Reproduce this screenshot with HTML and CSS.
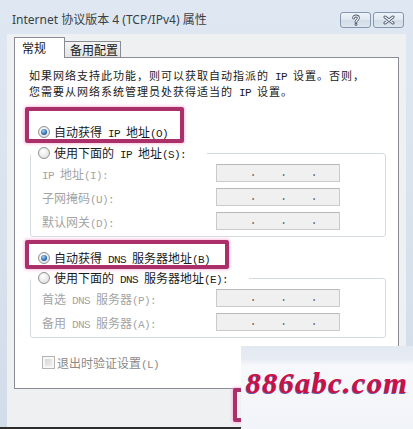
FILE: index.html
```html
<!DOCTYPE html>
<html lang="zh-CN">
<head>
    <meta charset="UTF-8">
    <meta name="viewport" content="width=device-width, initial-scale=1.0">
    <title>Internet 协议版本 4 (TCP/IPv4) 属性</title>
    <link rel="stylesheet" href="styles.css">
</head>
<body>
<div class="window">
    <!-- Title bar -->
    <div class="titlebar">
        <span class="title">Internet 协议版本 4 (TCP/IPv4) 属性</span>
        <div class="caption-buttons">
            <span class="cap-btn">
                <svg width="10" height="12" viewBox="0 0 10 12">
                    <path d="M2.6 4 C2.6 1.3 7.4 1.3 7.4 4 C7.4 6 5 6 5 8" fill="none" stroke="#4a5a70" stroke-width="2.8" stroke-linecap="round"/>
                    <path d="M2.6 4 C2.6 1.3 7.4 1.3 7.4 4 C7.4 6 5 6 5 8" fill="none" stroke="#fff" stroke-width="1.1" stroke-linecap="round"/>
                    <circle cx="5" cy="10.4" r="1.4" fill="#4a5a70"/>
                    <circle cx="5" cy="10.4" r="0.5" fill="#fff"/>
                </svg>
            </span>
            <span class="cap-btn">
                <svg width="14" height="10" viewBox="0 0 14 10">
                    <path d="M3 2 L11 8 M11 2 L3 8" stroke="#4a5a70" stroke-width="3" stroke-linecap="round"/>
                    <path d="M3 2 L11 8 M11 2 L3 8" stroke="#fff" stroke-width="1.2" stroke-linecap="round"/>
                </svg>
            </span>
        </div>
    </div>

    <div class="client">
        <!-- Tabs -->
        <div class="tabs">
            <span class="tab active">常规</span>
            <span class="tab">备用配置</span>
        </div>

        <div class="panel">
            <p class="desc">如果网络支持此功能，则可以获取自动指派的<span class="en"> IP </span>设置。否则，<br>您需要从网络系统管理员处获得适当的<span class="en"> IP </span>设置。</p>

            <div class="option first"><span class="radio checked"></span><span>自动获得<span class="en"> IP </span>地址<span class="en">(O)</span></span></div>

            <fieldset class="group">
                <legend class="option"><span class="radio"></span><span>使用下面的<span class="en"> IP </span>地址<span class="en">(S):</span></span></legend>
                <div class="field">
                    <label><span class="en">IP </span>地址<span class="en">(I):</span></label>
                    <div class="ip-box"><span></span><span>.</span><span>.</span><span>.</span></div>
                </div>
                <div class="field">
                    <label>子网掩码<span class="en">(U):</span></label>
                    <div class="ip-box"><span></span><span>.</span><span>.</span><span>.</span></div>
                </div>
                <div class="field">
                    <label>默认网关<span class="en">(D):</span></label>
                    <div class="ip-box"><span></span><span>.</span><span>.</span><span>.</span></div>
                </div>
            </fieldset>

            <div class="option dns"><span class="radio checked"></span><span>自动获得<span class="en"> DNS </span>服务器地址<span class="en">(B)</span></span></div>

            <fieldset class="group dns-group">
                <legend class="option"><span class="radio"></span><span>使用下面的<span class="en"> DNS </span>服务器地址<span class="en">(E):</span></span></legend>
                <div class="field">
                    <label>首选<span class="en"> DNS </span>服务器<span class="en">(P):</span></label>
                    <div class="ip-box"><span></span><span>.</span><span>.</span><span>.</span></div>
                </div>
                <div class="field">
                    <label>备用<span class="en"> DNS </span>服务器<span class="en">(A):</span></label>
                    <div class="ip-box"><span></span><span>.</span><span>.</span><span>.</span></div>
                </div>
            </fieldset>

            <div class="check-row"><span class="checkbox"></span><span>退出时验证设置<span class="en">(L)</span></span></div>
        </div>
    </div>

    <!-- annotation boxes drawn over the dialog -->
    <div class="mark mark-ip"></div>
    <div class="mark mark-dns"></div>
    <div class="mark mark-ok"></div>
    <div class="watermark">886abc.com</div>
</div>
</body>
</html>
```

FILE: styles.css
```css
* {
    box-sizing: border-box;
}

body {
    margin: 0;
    width: 413px;
    height: 429px;
    overflow: hidden;
    background: #d8e2ed;
    font-family: "Noto Sans CJK SC", "Noto Sans", sans-serif;
    font-size: 12px;
    color: #1a1a1a;
}

.en {
    font-family: "Liberation Mono", monospace;
    font-size: 11px;
    line-height: 10px;
    letter-spacing: -0.6px;
}

.window {
    position: relative;
    height: 429px;
    display: flex;
    flex-direction: column;
    background: linear-gradient(#dfe8f2, #d2dde9);
    border-bottom: 2px solid #2c2c2c;
}

/* Title bar */
.titlebar {
    height: 34px;
    flex-shrink: 0;
    display: flex;
    justify-content: space-between;
    padding: 0 9px 0 12px;
}

.title {
    margin-top: 12px;
    line-height: 16px;
    font-family: "Noto Sans", "Noto Sans CJK SC", sans-serif;
    color: #3a3f46;
}

.caption-buttons {
    display: flex;
    gap: 2px;
    margin-top: 12px;
}

.cap-btn {
    width: 31px;
    height: 16px;
    display: flex;
    align-items: center;
    justify-content: center;
    border: 1px solid #8597ae;
    border-radius: 3px;
    background: linear-gradient(#eef3f9, #dfe7f0 50%, #d2dce8 51%, #dde5ee);
}

/* Client area */
.client {
    flex: 1;
    margin: 0 7px;
    padding: 3px 0 0 7px;
    background: #eff0f2;
}

.tabs {
    display: flex;
    align-items: flex-start;
    height: 20px;
}

.tab {
    height: 16px;
    margin-top: 4px;
    margin-left: -1px;
    padding: 0 2px 0 5px;
    border: 1px solid #898c95;
    border-bottom: none;
    background: linear-gradient(#f4f4f4, #e4e4e4);
    line-height: 15px;
}

.tab.active {
    position: relative;
    z-index: 1;
    width: 51px;
    height: 21px;
    margin: 0;
    padding-left: 7px;
    background: #fff;
    line-height: 19px;
}

.panel {
    width: 385px;
    height: 332px;
    padding-top: 9px;
    border: 1px solid #898c95;
    background: #fff;
}

.desc {
    margin: 0 0 0 14px;
    font-size: 11px;
    letter-spacing: 1px;
    line-height: 16px;
    white-space: nowrap;
}

.option {
    display: flex;
    align-items: center;
    height: 16px;
    line-height: 16px;
    white-space: nowrap;
}

.option.first {
    margin: 25px 0 0 23px;
}

.option.dns {
    margin: 13px 0 0 23px;
}

.radio {
    position: relative;
    flex-shrink: 0;
    width: 12px;
    height: 12px;
    margin-right: 4px;
    border: 1px solid #8f9091;
    border-radius: 50%;
    background: radial-gradient(circle at 40% 35%, #fff, #d9d9d9);
}

.radio.checked::after {
    content: "";
    position: absolute;
    left: 2px;
    top: 2px;
    width: 6px;
    height: 6px;
    border-radius: 50%;
    background: radial-gradient(circle at 40% 35%, #9fd0f5, #1d5b9e 70%);
}

/* Group boxes */
.group {
    width: 356px;
    margin: 5px 0 0 15px;
    padding: 3px 0 6px 0;
    border: 1px solid #d6dbe0;
    border-radius: 3px;
    min-inline-size: auto;
}

.group.dns-group {
    margin-top: 4px;
}

.group legend {
    padding: 0 21px 0 7px;
}

.field {
    display: flex;
    align-items: center;
    height: 18px;
    margin-left: 11px;
}

.field + .field {
    margin-top: 6px;
}

.field label {
    width: 174px;
    color: #a4a4a4;
    white-space: nowrap;
}

.ip-box {
    width: 124px;
    height: 18px;
    display: grid;
    grid-template-columns: repeat(4, 1fr);
    border: 1px solid #cacaca;
    border-top-color: #b8b8b8;
    background: #f0f0f0;
    font-family: "Liberation Mono", monospace;
    line-height: 16px;
    color: #6a6a6a;
}

.ip-box span {
    padding-left: 2px;
}

/* Checkbox */
.check-row {
    display: flex;
    align-items: center;
    height: 16px;
    margin: 16px 0 0 27px;
    color: #8a8a8a;
    white-space: nowrap;
}

.checkbox {
    width: 13px;
    height: 13px;
    margin-right: 2px;
    padding: 2px;
    border: 1px solid #b4b4b4;
    background: #f7f7f7;
}

.checkbox::after {
    content: "";
    display: block;
    width: 7px;
    height: 7px;
    background: linear-gradient(135deg, #d6d6d6, #efefef);
}

/* Annotation marks over the screenshot */
.mark {
    position: absolute;
    border: 4px solid #ab2f69;
    border-radius: 2px;
    box-shadow: 0 0 3px 1px rgba(245, 170, 210, 0.7);
}

.mark-ip {
    left: 25px;
    top: 107px;
    width: 159px;
    height: 36px;
}

.mark-dns {
    left: 25px;
    top: 240px;
    width: 204px;
    height: 29px;
}

.mark-ok {
    left: 233px;
    top: 388px;
    width: 150px;
    height: 34px;
}

.watermark {
    position: absolute;
    left: 241px;
    top: 346px;
    width: 172px;
    height: 83px;
    padding: 22px 0 0 5px;
    background: linear-gradient(#e3e9f1 0, #e7ecf3 13px, #f7f8fb 20px, #f1f4f9 100%);
    font-family: "Liberation Serif", serif;
    font-style: italic;
    font-weight: bold;
    font-size: 30px;
    line-height: 30px;
    letter-spacing: 1.5px;
    color: #cf1142;
    text-shadow: -1px 1px 0 rgba(60, 40, 150, 0.75);
    white-space: nowrap;
}
```
